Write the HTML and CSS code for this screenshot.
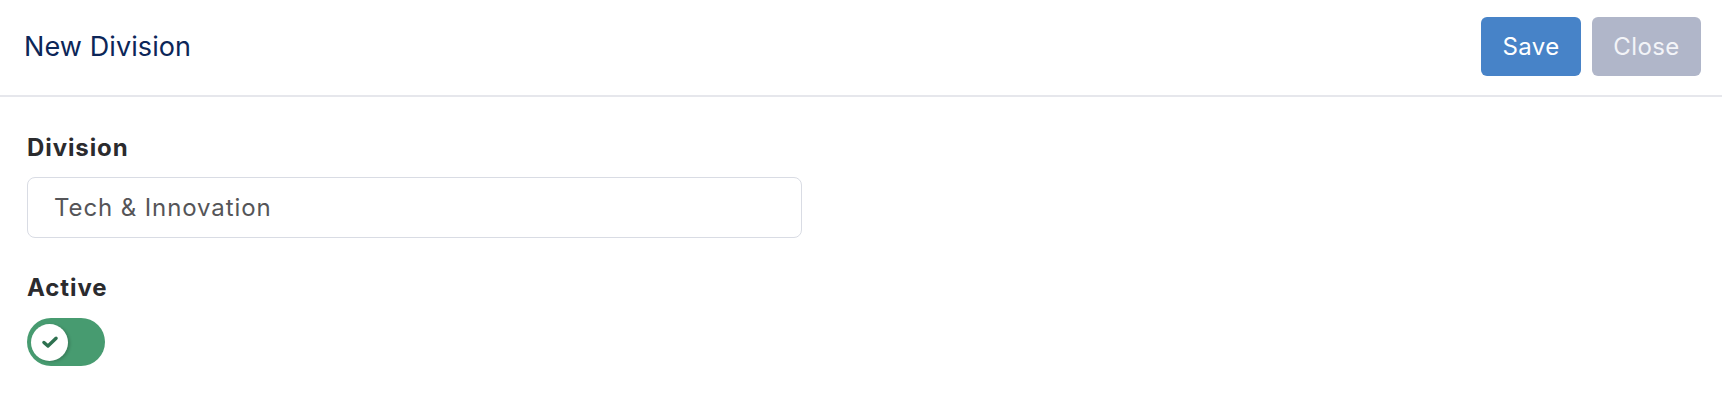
FILE: index.html
```html
<!DOCTYPE html>
<html lang="en">
<head>
<meta charset="utf-8">
<title>New Division</title>
<link rel="stylesheet" href="styles.css">
</head>
<body>
<div class="modal">
  <header class="modal-header">
    <h1 class="modal-title">New Division</h1>
    <div class="actions">
      <button class="btn btn-save" type="button">Save</button>
      <button class="btn btn-close" type="button">Close</button>
    </div>
  </header>
  <main class="modal-body">
    <div class="field">
      <label class="field-label" for="division">Division</label>
      <input class="text-input" id="division" type="text" value="Tech &amp; Innovation">
    </div>
    <div class="field field-toggle">
      <span class="field-label">Active</span>
      <span class="toggle" role="switch" aria-checked="true">
        <span class="knob">
          <svg class="check" viewBox="0 0 16 16" width="18" height="18" aria-hidden="true">
            <path d="M2.6 8.4 L6.2 11.6 L13.4 4.6" fill="none" stroke="#2e7150" stroke-width="3" stroke-linecap="round" stroke-linejoin="round"/>
          </svg>
        </span>
      </span>
    </div>
  </main>
</div>
</body>
</html>
```

FILE: styles.css
```css
* { box-sizing: border-box; }

html, body {
  margin: 0;
  padding: 0;
  background: #ffffff;
  font-family: Inter, "Noto Sans", "Liberation Sans", sans-serif;
}

.modal-header {
  display: flex;
  align-items: center;
  justify-content: space-between;
  height: 97px;
  padding: 0 21px 2px 24px;
  border-bottom: 2px solid #e6e7ec;
}

.modal-title {
  margin: 0;
  font-size: 27px;
  font-weight: 400;
  line-height: 32px;
  letter-spacing: 0.1px;
  color: #0c2658;
}

.actions {
  display: flex;
  gap: 11px;
}

.btn {
  height: 59px;
  border: 0;
  border-radius: 6px;
  font-family: inherit;
  font-size: 24px;
  font-weight: 400;
  letter-spacing: 0.4px;
  color: #ffffff;
  padding: 0;
  cursor: pointer;
}

.btn-save {
  width: 100px;
  background: #4783c8;
}

.btn-close {
  width: 109px;
  background: #b0b6c9;
  color: #f3f4f8;
}

.modal-body {
  padding: 37px 27px 0 27px;
}

.field {
  display: flex;
  flex-direction: column;
  align-items: flex-start;
}

.field-label {
  font-size: 24px;
  font-weight: 700;
  line-height: 28px;
  letter-spacing: 0.9px;
  color: #2b2b2e;
}

.text-input {
  margin-top: 15px;
  width: 775px;
  height: 61px;
  border: 1.5px solid #d9dce4;
  border-radius: 8px;
  padding: 0 26px;
  font-family: inherit;
  font-size: 24px;
  letter-spacing: 0.9px;
  color: #555558;
  background: #ffffff;
  outline: none;
}

.field-toggle {
  margin-top: 36px;
}

.toggle {
  margin-top: 16px;
  width: 78px;
  height: 48px;
  border-radius: 24px;
  background: #479b70;
  display: flex;
  align-items: center;
  padding-left: 4px;
}

.knob {
  width: 37px;
  height: 37px;
  border-radius: 50%;
  background: #ffffff;
  box-shadow: 2px 1px 3px rgba(0, 0, 0, 0.18);
  display: flex;
  align-items: center;
  justify-content: center;
}

.check {
  width: 18px;
  height: 18px;
}
```
